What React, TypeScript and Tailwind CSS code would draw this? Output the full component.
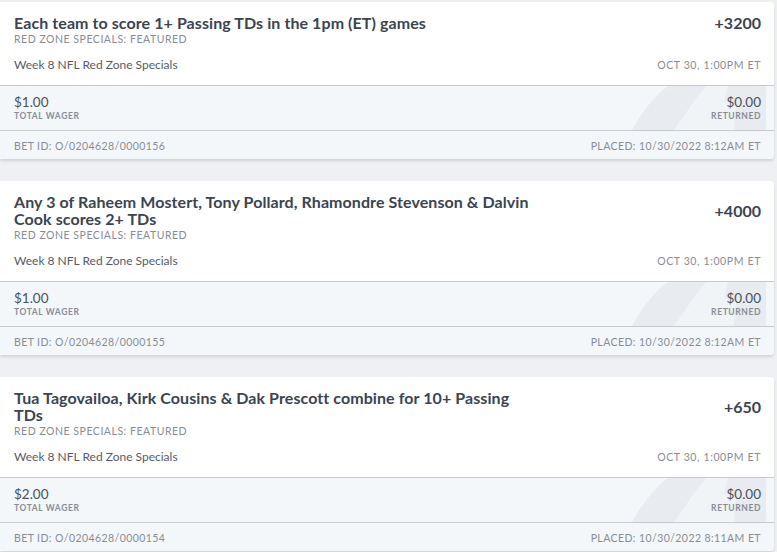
const bets = [
  {
    title: "Each team to score 1+ Passing TDs in the 1pm (ET) games",
    odds: "+3200",
    wager: "$1.00",
    id: "O/0204628/0000156",
    placed: "10/30/2022 8:12AM ET",
  },
  {
    title: "Any 3 of Raheem Mostert, Tony Pollard, Rhamondre Stevenson & Dalvin Cook scores 2+ TDs",
    odds: "+4000",
    wager: "$1.00",
    id: "O/0204628/0000155",
    placed: "10/30/2022 8:12AM ET",
  },
  {
    title: "Tua Tagovailoa, Kirk Cousins & Dak Prescott combine for 10+ Passing TDs",
    odds: "+650",
    wager: "$2.00",
    id: "O/0204628/0000154",
    placed: "10/30/2022 8:11AM ET",
  },
]

function Watermark() {
  return (
    <svg className="pointer-events-none absolute right-0 top-0 h-full w-[150px]" viewBox="0 0 150 44" preserveAspectRatio="none">
      <path d="M8 44 C18 26 30 10 44 0 L142 0 L142 44 Z" fill="#e8ebef" />
      <path d="M82 0 L104 0 L100 16 L112 18 L110 44 L50 44 C60 30 70 14 82 0 Z" fill="#f1f4f7" />
    </svg>
  )
}

function BetCard({ bet }: { bet: (typeof bets)[number] }) {
  return (
    <div className="mr-[3px] overflow-hidden rounded-r-[4px] bg-white shadow-[0_2px_3px_rgba(0,0,0,0.12)]">
      <div className="pb-[12px] pl-[14px] pr-[13px] pt-[12px]">
        <div className="flex items-center justify-between">
          <div className="max-w-[525px] text-[16px] font-bold leading-[17px] tracking-[0.005em] text-[#3b4450]">{bet.title}</div>
          <div className="text-[16px] font-bold leading-[17px] text-[#3b4450]">{bet.odds}</div>
        </div>
        <div className="text-[10.5px] uppercase leading-[16px] tracking-[0.05em] text-[#878d95]">
          Red Zone Specials: Featured
        </div>
        <div className="mt-[10px] flex items-center justify-between leading-[16px]">
          <span className="text-[12px] text-[#565c64]">Week 8 NFL Red Zone Specials</span>
          <span className="text-[10.5px] uppercase tracking-[0.06em] text-[#878d95]">Oct 30, 1:00PM ET</span>
        </div>
      </div>
      <div className="relative flex items-start justify-between border-t border-[#c7cbd0] bg-[#f4f7fa] pb-[8px] pl-[14px] pr-[13px] pt-[8px]">
        <Watermark />
        <div className="relative">
          <div className="text-[13.5px] leading-[16px] text-[#4a525b]">{bet.wager}</div>
          <div className="text-[8.5px] font-bold uppercase leading-[12px] tracking-[0.07em] text-[#878d95]">Total Wager</div>
        </div>
        <div className="relative text-right">
          <div className="text-[13.5px] leading-[16px] text-[#4a525b]">$0.00</div>
          <div className="text-[8.5px] font-bold uppercase leading-[12px] tracking-[0.07em] text-[#878d95]">Returned</div>
        </div>
      </div>
      <div className="flex items-center justify-between border-t border-[#c7cbd0] bg-[#f4f7fa] pb-[6px] pl-[14px] pr-[13px] pt-[8px] text-[10.5px] uppercase leading-[14px] tracking-[0.04em] text-[#878d95]">
        <span>Bet ID: {bet.id}</span>
        <span>Placed: {bet.placed}</span>
      </div>
    </div>
  )
}

export default function App() {
  return (
    <div className="min-h-screen bg-[#eef0f4] pt-[2px] font-['Lato',sans-serif]">
      <div className="flex flex-col gap-[22px]">
        {bets.map((b) => (
          <BetCard key={b.id} bet={b} />
        ))}
      </div>
    </div>
  )
}
